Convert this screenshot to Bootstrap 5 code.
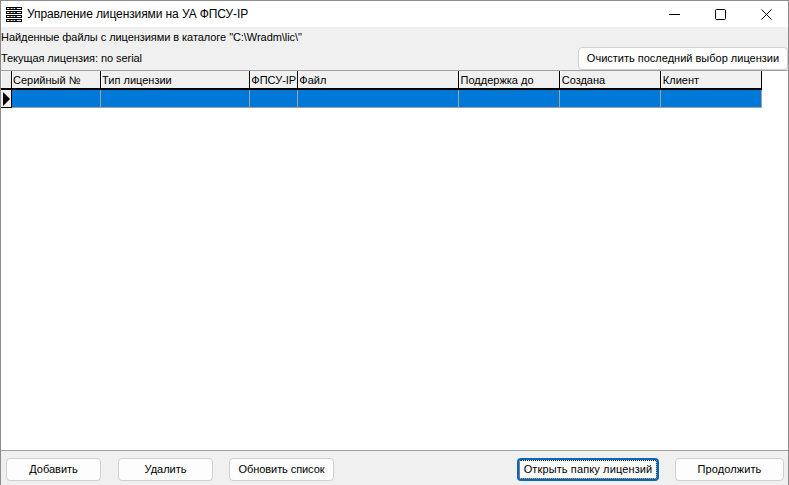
<!DOCTYPE html>
<html lang="ru">
<head>
<meta charset="utf-8">
<title>Управление лицензиями на УА ФПСУ-IP</title>
<link href="https://cdn.jsdelivr.net/npm/bootstrap@5.3.0/dist/css/bootstrap.min.css" rel="stylesheet">
<style>
html,body{height:485px;margin:0;overflow:hidden;background:#fff}
body{font-family:"Liberation Sans",Arial,sans-serif;font-size:11px;color:#000;line-height:1}
.win{height:485px;border:1px solid #8c8c8c;border-bottom:0}
.ttl{height:26px;background:#fff;font-size:12px;padding-left:5px;letter-spacing:-.1px}
.ttl-text{margin-left:5px}
.ctl{width:46px;height:26px;display:flex;align-items:center;justify-content:center}
.ctls{margin-right:-1px}
.info{height:43px;background:#f0f0f0;letter-spacing:-.06px}
.info-a{height:21px;padding-top:5px}
.info-b{height:22px}
.info-b span{margin-top:-2px}
.clr{width:210px;height:21px;margin-top:-1px;letter-spacing:0}
.pbtn{background:#fdfdfd;border:1px solid #d0d0d0;border-radius:4px;font-size:11px;line-height:1;padding:0;color:#000;height:23px;flex-shrink:0}
.pbtn:hover{background:#fdfdfd;border-color:#d0d0d0;color:#000}
.pbtn-focus{border:2px solid #0067c0;outline:1px dotted #000;outline-offset:-3px;border-radius:4px}
.grd{border-top:1px solid #a0a0a0;border-bottom:1px solid #a0a0a0;background:#fff}
.tbl{border-collapse:separate;border-spacing:0;table-layout:fixed;width:761px}
.tbl th{height:19px;background:#f0f0f0;font-weight:400;padding:2px 0 0 2px;border-right:1px solid #000;border-bottom:2px solid #000;box-shadow:inset 1px 0 0 #fff;white-space:nowrap;overflow:hidden;vertical-align:middle}
.tbl th.hd-n{padding-left:1px}
.tbl td{height:18px;background:#0078d7;padding:0;border-right:1px solid #a0a0a0;border-bottom:1px solid #a0a0a0}
.tbl .ind{background:#f0f0f0;border-right:1px solid #000;border-bottom:1px solid #000}
.arrow{display:block;margin:1px 0 0 2px}
.foot{height:34px;background:#f0f0f0;padding:7px 4px 0 5px}
.fb-add{width:95px}.fb-del{width:95px;margin-left:17px}.fb-upd{width:105px;margin-left:16px;letter-spacing:-.08px}.fb-open{width:142px;margin-left:183px;letter-spacing:.12px}.fb-next{width:109px;margin-left:16px;letter-spacing:.1px}
</style>
</head>
<body>
<div class="win d-flex flex-column">
  <div class="ttl d-flex align-items-center flex-shrink-0">
    <svg width="16" height="15" viewBox="0 0 16 15" shape-rendering="crispEdges">
      <g fill="#000"><rect y="0" width="16" height="3"/><rect y="4" width="16" height="3"/><rect y="8" width="16" height="3"/><rect y="12" width="16" height="3"/></g>
      <g fill="#fff"><rect x="1" y="1" width="14" height="1"/><rect x="1" y="5" width="14" height="1"/><rect x="1" y="9" width="14" height="1"/><rect x="1" y="13" width="14" height="1"/></g>
      <g fill="#d22"><rect x="3" y="1" width="2" height="1"/><rect x="3" y="5" width="2" height="1"/><rect x="3" y="9" width="2" height="1"/><rect x="3" y="13" width="2" height="1"/></g>
      <g fill="#2b2"><rect x="6" y="1" width="2" height="1"/><rect x="6" y="5" width="2" height="1"/><rect x="6" y="9" width="2" height="1"/><rect x="6" y="13" width="2" height="1"/></g>
      <g fill="#22d"><rect x="9" y="1" width="2" height="1"/><rect x="9" y="5" width="2" height="1"/><rect x="9" y="9" width="2" height="1"/><rect x="9" y="13" width="2" height="1"/></g>
    </svg>
    <span class="ttl-text flex-grow-1">Управление лицензиями на УА ФПСУ-IP</span>
    <div class="d-flex ctls">
      <div class="ctl"><svg width="11" height="11" viewBox="0 0 11 11"><path d="M0 5.5H11" stroke="#000"/></svg></div>
      <div class="ctl"><svg width="11" height="11" viewBox="0 0 11 11"><rect x=".5" y=".5" width="10" height="10" rx="1" fill="none" stroke="#000"/></svg></div>
      <div class="ctl"><svg width="11" height="11" viewBox="0 0 11 11"><path d="M.5 .5L10.5 10.5M10.5 .5L.5 10.5" stroke="#000" fill="none"/></svg></div>
    </div>
  </div>
  <div class="info flex-shrink-0">
    <div class="info-a">Найденные файлы с лицензиями в каталоге "C:\Wradm\lic\"</div>
    <div class="info-b d-flex justify-content-between align-items-center">
      <span>Текущая лицензия: no serial</span>
      <button type="button" class="btn pbtn clr">Очистить последний выбор лицензии</button>
    </div>
  </div>
  <div class="grd flex-grow-1">
    <table class="tbl">
      <colgroup><col style="width:11px"><col style="width:89px"><col style="width:149px"><col style="width:48px"><col style="width:160px"><col style="width:101px"><col style="width:101px"><col style="width:101px"></colgroup>
      <thead><tr><th></th><th class="hd-n">Серийный №</th><th class="hd-n">Тип лицензии</th><th class="hd-n">ФПСУ-IP</th><th class="hd-n">Файл</th><th>Поддержка до</th><th>Создана</th><th>Клиент</th></tr></thead>
      <tbody><tr><td class="ind"><svg class="arrow" width="7" height="14" viewBox="0 0 7 14"><path d="M0 0L7 7L0 14Z" fill="#000"/></svg></td><td></td><td></td><td></td><td></td><td></td><td></td><td></td></tr></tbody>
    </table>
  </div>
  <div class="foot d-flex flex-shrink-0">
    <button type="button" class="btn pbtn fb-add">Добавить</button>
    <button type="button" class="btn pbtn fb-del">Удалить</button>
    <button type="button" class="btn pbtn fb-upd">Обновить список</button>
    <button type="button" class="btn pbtn pbtn-focus fb-open">Открыть папку лицензий</button>
    <button type="button" class="btn pbtn fb-next">Продолжить</button>
  </div>
</div>
</body>
</html>
